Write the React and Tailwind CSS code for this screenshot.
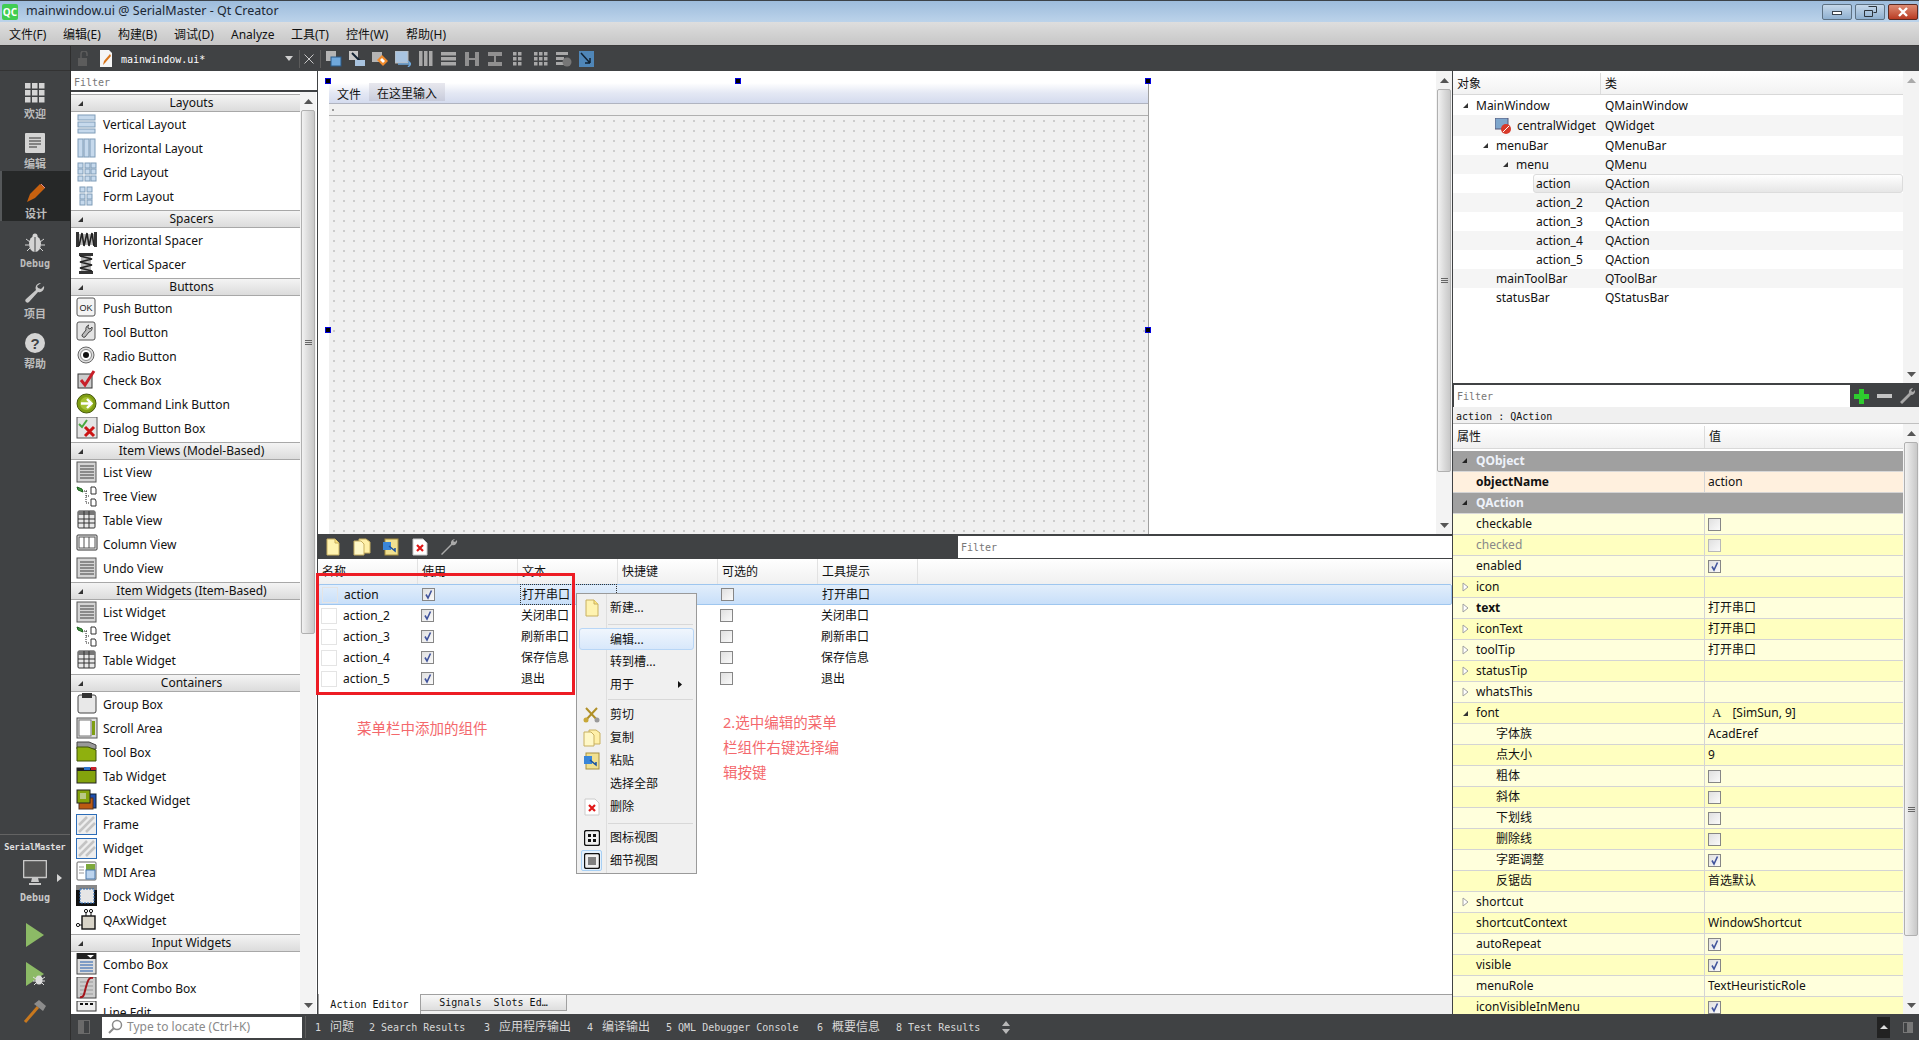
import React from "react";

const MONO = "font-['DejaVu_Sans_Mono','Noto_Sans_CJK_SC',monospace]";

const Svg = ({ w = 22, h = 22, vb, children, className = "" }) => (
  <svg width={w} height={h} viewBox={vb || `0 0 ${w} ${h}`} className={"shrink-0 " + className}>{children}</svg>
);

const blue = { fill: "#c6d9ec", stroke: "#7f9cb8" };
const listLines = (
  <g>
    <rect x="1" y="1" width="19" height="20" fill="#d4d4d4" stroke="#555" />
    {[4, 7, 10, 13, 16].map((y) => <rect key={y} x="4" y={y} width="14" height="2" fill="#8a8a8a" />)}
  </g>
);
const treeIcon = (
  <g>
    <path d="M1 2l5 2 1 3-5-2z" fill="#3f9a3f" stroke="#1e5e1e" />
    <path d="M8 6h4M10 6v12h3M10 11h3" stroke="#222" strokeDasharray="1 1" fill="none" />
    <path d="M15 2h4l1 2v5h-5zM15 14h4l1 2v5h-5z" fill="#fff" stroke="#333" />
  </g>
);
const tableIcon = (
  <g>
    <rect x="2" y="2" width="17" height="17" rx="1" fill="#e8e8e8" stroke="#333" />
    <rect x="2" y="2" width="17" height="4" fill="#777" />
    <path d="M2 10h17M2 14h17M8 2v17M13 2v17" stroke="#333" />
  </g>
);
const hatch = (
  <g stroke="#c4c4c4" strokeWidth="2.5">
    <path d="M3 12l8-8M3 19l15-15M10 19l9-9" />
  </g>
);

const WI = {
  v: <g {...blue}><rect x="2" y="2" width="17" height="5" /><rect x="2" y="9" width="17" height="5" /><rect x="2" y="16" width="17" height="4" /></g>,
  h: <g {...blue}><rect x="2" y="2" width="5" height="18" /><rect x="8" y="2" width="5" height="18" /><rect x="14" y="2" width="5" height="18" /></g>,
  g: <g {...blue}>{[2, 9, 15].flatMap((x) => [2, 8, 15].map((y) => <rect key={x + "-" + y} x={x} y={y} width="5" height="5" />))}</g>,
  f: <g {...blue}>{[4, 11].flatMap((x) => [2, 9, 15].map((y) => <rect key={x + "-" + y} x={x} y={y} width="5" height="5" />))}</g>,
  hs: <g><rect x="0" y="3" width="3" height="15" fill="#333" /><rect x="18" y="3" width="3" height="15" fill="#333" /><rect x="3" y="5" width="15" height="11" fill="#bbb" /><path d="M3 17l3-13 2 13 3-13 2 13 3-13 2 13" fill="none" stroke="#222" strokeWidth="1.6" /></g>,
  vs: <g><rect x="3" y="0" width="14" height="3" fill="#333" /><rect x="3" y="18" width="14" height="3" fill="#333" /><rect x="5" y="3" width="10" height="15" fill="#bbb" /><path d="M4 3l12 3-12 3 12 3-12 3 12 3" fill="none" stroke="#222" strokeWidth="1.6" /></g>,
  ok: <g><rect x="1" y="1" width="18" height="18" rx="2" fill="#f4f4f4" stroke="#555" /><text x="10" y="14" fontSize="9" textAnchor="middle" fill="#222" fontFamily="Liberation Sans">OK</text></g>,
  tb: <g><rect x="1" y="1" width="18" height="18" rx="2" fill="#e4e4e4" stroke="#555" /><path d="M13 4a4 4 0 00-3 5l-4 5a2 2 0 003 2l4-5a4 4 0 003-5l-2 2-2-1V5z" fill="#bbb" stroke="#444" /></g>,
  r: <g><circle cx="10" cy="10" r="8" fill="#ddd" stroke="#666" /><circle cx="10" cy="10" r="5.5" fill="#fff" stroke="#888" /><circle cx="10" cy="10" r="3" fill="#111" /></g>,
  c: <g><rect x="2" y="5" width="14" height="14" fill="#ccc" stroke="#333" /><path d="M5 11l4 5 9-14" fill="none" stroke="#c8202a" strokeWidth="3" /></g>,
  cl: <g><circle cx="10.5" cy="10.5" r="9.5" fill="#7f9e13" stroke="#46590a" /><circle cx="10.5" cy="10.5" r="6.5" fill="#a6c233" /><path d="M5 10.5h10M11 6l4.5 4.5L11 15" fill="none" stroke="#fff" strokeWidth="2.4" /></g>,
  d: <g><rect x="1" y="0" width="20" height="21" fill="#e4e4e4" stroke="#555" /><path d="M3 7l3 3 5-7" fill="none" stroke="#49a83e" strokeWidth="2" /><path d="M9 10l9 9M18 10l-9 9" stroke="#cc1414" strokeWidth="3" /></g>,
  l: listLines, t: treeIcon, ta: tableIcon,
  co: <g><rect x="1" y="2" width="20" height="15" rx="1" fill="#f4f4f4" stroke="#333" /><rect x="3" y="4" width="16" height="11" fill="#fff" stroke="#555" /><path d="M8 4v11M13 4v11" stroke="#555" /></g>,
  gb: <g><rect x="2" y="2" width="18" height="18" rx="2" fill="#e8e8e8" stroke="#444" /><rect x="6" y="0" width="10" height="5" fill="#333" /></g>,
  sa: <g><rect x="1" y="1" width="20" height="20" fill="#ddd" stroke="#555" /><rect x="3" y="3" width="12" height="16" fill="#fff" stroke="#777" /><rect x="16" y="4" width="3" height="14" fill="#7f9e13" /></g>,
  tbx: <g><path d="M1 1l12 0 7 3v4H1z" fill="#999" stroke="#444" /><path d="M1 6h11l8 3v11H1z" fill="#8fb00e" stroke="#3e5206" /></g>,
  tw: <g><rect x="1" y="3" width="19" height="15" fill="#84a30c" stroke="#222" /><rect x="1" y="3" width="19" height="3" fill="#222" /><rect x="8" y="2" width="6" height="3" fill="#2d73c9" /><rect x="15" y="2" width="5" height="3" fill="#c8202a" /></g>,
  sw: <g><rect x="13" y="5" width="7" height="14" fill="#1f4fae" stroke="#123" /><rect x="3" y="9" width="14" height="11" fill="#bb5a12" stroke="#532" /><rect x="1" y="1" width="13" height="13" fill="#84a30c" stroke="#222" /><path d="M4 5h6M4 7h6M4 9h6" stroke="#eef" /></g>,
  fr: <g><rect x="0.5" y="1.5" width="20" height="20" fill="#eee" stroke="#2d6db8" />{hatch}</g>,
  wd: <g><rect x="0.5" y="1.5" width="20" height="20" fill="#eee" stroke="#2d6db8" />{hatch}</g>,
  m: <g><rect x="1" y="1" width="19" height="18" rx="1" fill="#fff" stroke="#666" /><rect x="10" y="3" width="9" height="6" fill="#7da83a" /><rect x="10" y="9" width="9" height="9" fill="#bcd4ee" stroke="#4b78aa" /><path d="M3 6h5M3 9h5M3 12h5" stroke="#999" /></g>,
  dk: <g><rect x="0" y="0" width="21" height="21" fill="#111" /><rect x="0" y="0" width="21" height="5" fill="#888" /><rect x="4" y="4" width="14" height="14" fill="#e6e6e6" stroke="#2d6db8" strokeDasharray="2 1" /></g>,
  q: <g><rect x="6" y="7" width="13" height="13" fill="#d8d4c8" stroke="#111" strokeWidth="1.4" /><path d="M10 7V3M15 7V3M0 16h6" stroke="#111" /><circle cx="10" cy="2" r="1.6" fill="#fff" stroke="#111" /><circle cx="15" cy="2" r="1.6" fill="#fff" stroke="#111" /><circle cx="2" cy="16" r="1.6" fill="#fff" stroke="#111" /></g>,
  cb: <g><rect x="1" y="0" width="19" height="21" fill="#ddd" stroke="#444" /><rect x="1" y="0" width="19" height="6" fill="#222" /><path d="M11 2h7l-3.500 3z" fill="#fff" /><path d="M4 9h13M4 12h13M4 15h13M4 18h13" stroke="#5f86bd" strokeWidth="1.6" /></g>,
  fc: <g><rect x="1" y="0" width="19" height="21" fill="#ccc" stroke="#444" /><path d="M4 5h13M4 9h13M4 13h13M4 17h13" stroke="#999" /><path d="M4 20c4 1 4-3 6-10s3-10 7-9" fill="none" stroke="#a3151b" strokeWidth="2" /></g>,
  le: <g><rect x="1" y="0" width="19" height="10" fill="#eee" stroke="#333" /><path d="M4 3h3M9 3h3M14 3h3" stroke="#111" strokeWidth="2" /></g>,
};

const CATS = [
  ["Layouts", [["v", "Vertical Layout"], ["h", "Horizontal Layout"], ["g", "Grid Layout"], ["f", "Form Layout"]]],
  ["Spacers", [["hs", "Horizontal Spacer"], ["vs", "Vertical Spacer"]]],
  ["Buttons", [["ok", "Push Button"], ["tb", "Tool Button"], ["r", "Radio Button"], ["c", "Check Box"], ["cl", "Command Link Button"], ["d", "Dialog Button Box"]]],
  ["Item Views (Model-Based)", [["l", "List View"], ["t", "Tree View"], ["ta", "Table View"], ["co", "Column View"], ["l", "Undo View"]]],
  ["Item Widgets (Item-Based)", [["l", "List Widget"], ["t", "Tree Widget"], ["ta", "Table Widget"]]],
  ["Containers", [["gb", "Group Box"], ["sa", "Scroll Area"], ["tbx", "Tool Box"], ["tw", "Tab Widget"], ["sw", "Stacked Widget"], ["fr", "Frame"], ["wd", "Widget"], ["m", "MDI Area"], ["dk", "Dock Widget"], ["q", "QAxWidget"]]],
  ["Input Widgets", [["cb", "Combo Box"], ["fc", "Font Combo Box"], ["le", "Line Edit"]]],
];

const Tri = ({ color = "#333" }) => (
  <svg width="7" height="7" viewBox="0 0 7 7" className="shrink-0"><path d="M6 1v5H1z" fill={color} /></svg>
);
const Open = () => (
  <svg width="7" height="10" viewBox="0 0 7 10" className="shrink-0"><path d="M1 1l5 4-5 4z" fill="#fff" stroke="#a0a0a0" /></svg>
);

const Check = ({ on, dim }) => (
  <div className={"flex h-[13px] w-[13px] shrink-0 items-center justify-center border bg-gradient-to-br from-[#e0e0e0] to-[#fafafa] " + (dim ? "border-[#b8b8b8]" : "border-[#868686]")}>
    {on && (
      <svg width="11" height="11" viewBox="0 0 11 11"><path d="M3 5.500l2 3.500 3.500-7.500" fill="none" stroke="#41549c" strokeWidth="1.600" /></svg>
    )}
  </div>
);

const Scroll = ({ thumb, gripClass = "", up = "", className = "" }) => (
  <div className={"flex w-[16px] shrink-0 flex-col items-center bg-[#f3f3f3] " + className}>
    <div className="flex h-[18px] w-full items-center justify-center">
      <svg width="9" height="5" viewBox="0 0 9 5"><path d="M4.500 0l4.500 5H0z" fill={up || "#555"} /></svg>
    </div>
    <div className={"flex w-[14px] flex-col items-center justify-center rounded-[2px] border border-[#b0b0b0] bg-gradient-to-r from-[#f2f2f2] via-[#dcdcdc] to-[#c8c8c8] " + thumb}>
      <div className={"flex flex-col gap-[1px] " + gripClass}>
        <div className="h-[1px] w-[7px] bg-[#666]" /><div className="h-[1px] w-[7px] bg-[#666]" /><div className="h-[1px] w-[7px] bg-[#666]" />
      </div>
    </div>
    <div className="flex-1" />
    <div className="flex h-[18px] w-full items-center justify-center">
      <svg width="9" height="5" viewBox="0 0 9 5"><path d="M4.500 5L9 0H0z" fill="#555" /></svg>
    </div>
  </div>
);

const TitleBar = () => (
  <div className="flex h-[22px] shrink-0 items-center border-t border-[#3c4248] bg-gradient-to-b from-[#9dbcdc] to-[#bcd3ea]">
    <div className="ml-[2px] flex h-[16px] w-[16px] items-center justify-center rounded-[2px] bg-[#41cd52] text-[10px] font-bold leading-none text-white">QC</div>
    <div className="ml-[8px] text-[12.500px] leading-none text-[#1c2733]">mainwindow.ui @ SerialMaster - Qt Creator</div>
    <div className="ml-auto mr-[1px] flex gap-[3px]">
      <div className="flex h-[16px] w-[30px] items-center justify-center rounded-[2px] border border-[#5d7183] bg-gradient-to-b from-[#c6d8ea] to-[#8fb0d0]">
        <div className="mt-[2px] h-[4px] w-[10px] border border-[#39424c] bg-white" />
      </div>
      <div className="flex h-[16px] w-[30px] items-center justify-center rounded-[2px] border border-[#5d7183] bg-gradient-to-b from-[#c6d8ea] to-[#8fb0d0]">
        <svg width="13" height="11" viewBox="0 0 13 11"><path d="M4.500.5h8v6h-3M.5 4.500h8v6h-8z" fill="none" stroke="#2c343c" /></svg>
      </div>
      <div className="flex h-[16px] w-[30px] items-center justify-center rounded-[2px] border border-[#5a2a22] bg-gradient-to-b from-[#dc8a72] to-[#b93a22]">
        <svg width="12" height="10" viewBox="0 0 12 10"><path d="M2 1l8 8M10 1L2 9" stroke="#fff" strokeWidth="2.400" /></svg>
      </div>
    </div>
  </div>
);

const MENU = [["文件(F)", "w-[54px]"], ["编辑(E)", "w-[55px]"], ["构建(B)", "w-[56px]"], ["调试(D)", "w-[57px]"], ["Analyze", "w-[60px]"], ["工具(T)", "w-[55px]"], ["控件(W)", "w-[60px]"], ["帮助(H)", "w-[60px]"]];
const MenuBar = () => (
  <div className="flex h-[24px] shrink-0 items-center bg-gradient-to-b from-[#dedede] to-[#c6c6c6] pl-[9px] pt-[2px] text-[12px] text-[#111] border-b border-[#3a3a3a]">
    {MENU.map(([t, w]) => <div key={t} className={w}>{t}</div>)}
  </div>
);

const Mode = ({ label, children, active, mono }) => (
  <div className={"flex h-[50px] flex-col items-center pt-[12px] " + (active ? "border-l-2 border-[#55585a] bg-[#262828]" : "")}>
    <div className="flex h-[20px] items-center justify-center">{children}</div>
    <div className={"mt-[4px] font-bold leading-[14px] text-[#bcbcbc] " + (mono ? MONO + " text-[10px]" : "text-[11px]")}>{label}</div>
  </div>
);

const Sidebar = () => (
  <div className="flex w-[71px] shrink-0 flex-col border-r border-[#2e2e2e] bg-[#404244]">
    <div className="h-[25px] border-b border-[#333]" />
    <Mode label="欢迎">
      <Svg w={20} h={20}>{[0, 7, 14].flatMap((x) => [0, 7, 14].map((y) => <rect key={x + "" + y} x={x} y={y} width="5.500" height="5.500" fill="#d4d4d4" />))}</Svg>
    </Mode>
    <Mode label="编辑">
      <Svg w={20} h={20}><rect x="0" y="0" width="20" height="20" rx="1" fill="#d4d4d4" /><path d="M4 5h12M4 8h12M4 11h12M4 14h8" stroke="#333" /></Svg>
    </Mode>
    <Mode label="设计" active>
      <Svg w={20} h={20}><path d="M1 19l3-8L14 1l5 4L9 15z" fill="#c8610f" /><path d="M15 1l4 4" stroke="#e88" /></Svg>
    </Mode>
    <Mode label="Debug" mono>
      <Svg w={20} h={20}><ellipse cx="10" cy="11" rx="6" ry="8" fill="#d4d4d4" /><circle cx="10" cy="3" r="2.500" fill="#d4d4d4" /><path d="M1 6l4 3M19 6l-4 3M0 12h4M20 12h-4M2 18l3-3M18 18l-3-3M10 3v16" stroke="#d4d4d4" /><path d="M10 4v16" stroke="#404244" /></Svg>
    </Mode>
    <Mode label="项目">
      <Svg w={20} h={20}><path d="M16 0a5 5 0 00-5 7L1 16a2 2 0 003 3l9-10a5 5 0 006-6l-3 3-3-1-1-2z" fill="#c8c8c8" /></Svg>
    </Mode>
    <Mode label="帮助">
      <Svg w={20} h={20}><circle cx="10" cy="10" r="10" fill="#d4d4d4" /><text x="10" y="15.500" fontSize="15" fontWeight="700" fontFamily="Liberation Sans" textAnchor="middle" fill="#404244">?</text></Svg>
    </Mode>
    <div className="flex-1" />
    <div className="flex h-[206px] flex-col items-center border-t border-[#636363] pt-[5px]">
      <div className={MONO + " text-[8.500px] font-bold leading-[14px] text-[#e0e0e0]"}>SerialMaster</div>
      <div className="relative mt-[6px] flex w-full justify-center">
        <Svg w={24} h={25}><rect x="0.500" y="0.500" width="23" height="17" rx="1" fill="#555" stroke="#c8c8c8" strokeWidth="1.600" /><path d="M9 18h6l1 4H8zM6 23h12v2H6z" fill="#c8c8c8" /></Svg>
        <svg width="5" height="8" viewBox="0 0 5 8" className="absolute right-[8px] top-[14px]"><path d="M0 0l5 4-5 4z" fill="#d4d4d4" /></svg>
      </div>
      <div className={MONO + " mt-[6px] text-[10px] font-bold leading-[14px] text-[#c8c8c8]"}>Debug</div>
      <Svg w={20} h={24} className="mt-[18px]"><path d="M1 0l18 12L1 24z" fill="#8cba66" /></Svg>
      <div className="relative mt-[15px] h-[24px] w-[20px]">
        <Svg w={20} h={24}><path d="M1 0l18 12L1 24z" fill="#8cba66" /></Svg>
        <svg width="12" height="12" viewBox="0 0 12 12" className="absolute left-[8px] top-[11px]"><ellipse cx="6" cy="7" rx="3.500" ry="4.500" fill="#ddd" /><path d="M0 4l3 2M12 4L9 6M0 8h3M12 8H9M1 12l2-2M11 12L9 10" stroke="#ddd" /></svg>
      </div>
      <Svg w={24} h={24} className="mt-[13px]"><path d="M2 23L15 8" stroke="#c8781e" strokeWidth="3" /><path d="M11 5l5-4 7 6-3 5z" fill="#8c8c8c" /></Svg>
    </div>
  </div>
);

const ToolIcon = ({ children }) => <div className="flex h-[25px] w-[23px] items-center justify-center">{children}</div>;

const TopTool = () => (
  <div className="flex h-[25px] shrink-0 items-center bg-[#404244]">
    <Svg w={14} h={16} className="ml-[6px]"><rect x="1" y="7" width="9" height="8" fill="#5c5c5c" /><path d="M4 7V3a3 3 0 016 0v2" fill="none" stroke="#5c5c5c" strokeWidth="1.500" /></Svg>
    <Svg w={14} h={19} className="ml-[8px]"><path d="M1 1h9l3 3v14H1z" fill="#f5f5f5" /><path d="M4 16l1-4 6-7 1 2-6 7z" fill="#d8741a" /></Svg>
    <div className={MONO + " ml-[8px] w-[164px] pt-[2px] text-[10px] text-white"}>mainwindow.ui*</div>
    <svg width="8" height="5" viewBox="0 0 8 5"><path d="M0 0h8L4 5z" fill="#d0d0d0" /></svg>
    <div className="ml-[6px] h-[18px] w-[1px] bg-[#5c5c5c]" />
    <svg width="10" height="10" viewBox="0 0 10 10" className="ml-[4px]"><path d="M.5.5l9 9M9.500.5l-9 9" stroke="#c8c8c8" /></svg>
    <div className="ml-[6px] h-[18px] w-[1px] bg-[#5c5c5c]" />
    <div className="ml-[1px] flex">
      <ToolIcon><Svg w={16} h={16}><rect x="0" y="0" width="10" height="10" fill="#b4b4b4" /><rect x="5" y="6" width="10" height="9" fill="#6fa8dc" stroke="#2a5a88" /></Svg></ToolIcon>
      <ToolIcon><Svg w={16} h={16}><rect x="0" y="0" width="9" height="9" fill="#c8c8c8" /><path d="M3 2l8 8" stroke="#123" strokeWidth="2" /><rect x="6" y="9" width="10" height="6" fill="#a9c4e0" /></Svg></ToolIcon>
      <ToolIcon><Svg w={16} h={16}><rect x="0" y="1" width="10" height="10" fill="#b4b4b4" /><path d="M5 9l5-5 6 6-5 5z" fill="#f08a2c" /><path d="M8 9l2-2 3 3-2 2z" fill="#fff" /></Svg></ToolIcon>
      <ToolIcon><Svg w={16} h={16}><rect x="0" y="0" width="13" height="12" fill="#a9c4e0" stroke="#bbb" /><path d="M3 13h12M13 10l3 3-3 3" stroke="#6fa8dc" fill="none" strokeWidth="1.500" /></Svg></ToolIcon>
      <ToolIcon><Svg w={14} h={15}><path d="M0 0h3.500v15H0zM5 0h3.500v15H5zM10 0h3.500v15H10z" fill="#a8a8a8" /></Svg></ToolIcon>
      <ToolIcon><Svg w={15} h={14}><path d="M0 0h15v3.500H0zM0 5h15v3.500H0zM0 10h15v3.500H0z" fill="#a8a8a8" /></Svg></ToolIcon>
      <ToolIcon><Svg w={14} h={14}><path d="M0 0h4v14H0zM10 0h4v14h-4zM4 6h6v2H4z" fill="#909090" /></Svg></ToolIcon>
      <ToolIcon><Svg w={14} h={14}><path d="M0 0h14v4H0zM0 10h14v4H0zM6 4h2v6H6z" fill="#909090" /></Svg></ToolIcon>
      <ToolIcon><Svg w={9} h={14}>{[0, 5].flatMap((x) => [0, 5, 10].map((y) => <rect key={x + "" + y} x={x} y={y} width="3.500" height="3.500" fill="#a8a8a8" />))}</Svg></ToolIcon>
      <ToolIcon><Svg w={14} h={14}>{[0, 5, 10].flatMap((x) => [0, 5, 10].map((y) => <rect key={x + "" + y} x={x} y={y} width="3.500" height="3.500" fill="#a8a8a8" />))}</Svg></ToolIcon>
      <ToolIcon><Svg w={16} h={16}><path d="M0 1h12v3H0zM0 6h8v3H0zM0 11h8v3H0z" fill="#a8a8a8" /><circle cx="11" cy="11" r="4.500" fill="#777" /></Svg></ToolIcon>
      <ToolIcon><Svg w={15} h={16}><rect x="0" y="0" width="15" height="16" fill="#4f86b8" /><path d="M2 2l9 10M11 12V7M11 12H6" stroke="#123" strokeWidth="1.500" fill="none" /></Svg></ToolIcon>
    </div>
  </div>
);

const WidgetBox = () => (
  <div className="flex w-[246px] shrink-0 flex-col bg-white">
    <div className={MONO + " mt-[1px] flex h-[20px] shrink-0 items-center border-b-2 border-[#404244] pl-[3px] pt-[2px] text-[10px] text-[#777]"}>Filter</div>
    <div className="flex min-h-0 flex-1">
      <div className="w-[229px] overflow-hidden pt-[2px]">
        {CATS.map(([name, items]) => (
          <div key={name} className="pb-[2px]">
            <div className="relative flex h-[18px] items-center justify-center border-y border-[#a8a8a8] bg-gradient-to-b from-[#f4f4f4] to-[#dcdcdc] pl-[12px] text-[12px] text-[#111]">
              <div className="absolute left-[6px] top-[5px]"><Tri /></div>
              {name}
            </div>
            {items.map(([k, t]) => (
              <div key={t} className="flex h-[24px] items-center pl-[5px] text-[12px] text-[#111]">
                <Svg>{WI[k]}</Svg>
                <span className="ml-[5px] mt-[2px] whitespace-nowrap">{t}</span>
              </div>
            ))}
          </div>
        ))}
      </div>
      <Scroll thumb="h-[524px]" gripClass="mt-[-60px]" />
    </div>
  </div>
);

const Handle = ({ cls }) => <div className={"absolute h-[6px] w-[6px] border border-[#0000e0] bg-black " + cls} />;

const FormEditor = () => (
  <div className="flex h-[463px] shrink-0">
    <div className="relative min-w-0 flex-1 overflow-hidden bg-white pl-[11px] pt-[12px]">
      <div className="h-[500px] w-[820px] border-r border-[#a0a0a0] bg-[#f0f0f0]">
        <div className="flex h-[21px] items-start border-b border-[#b0b4c0] bg-gradient-to-b from-white via-[#e4e8f4] to-[#d4dbee] text-[12px] text-[#111]">
          <div className="ml-[8px] mt-[3px]">文件</div>
          <div className="ml-[8px] flex h-[18px] w-[76px] items-center justify-center bg-gradient-to-b from-[#e8e8ee] to-[#c8ccdc] pt-[3px]">在这里输入</div>
        </div>
        <div className="flex h-[12px] items-center border-b border-[#b0b0b0] pl-[3px]">
          <div className="h-[2px] w-[2px] bg-[#999]" />
        </div>
        <div className="h-[470px] bg-[radial-gradient(#a4a4a4_0.6px,transparent_0.8px)] bg-[size:10px_10px]" />
      </div>
      <Handle cls="left-[7px] top-[7px]" />
      <Handle cls="left-[417px] top-[7px]" />
      <Handle cls="left-[827px] top-[7px]" />
      <Handle cls="left-[7px] top-[256px]" />
      <Handle cls="left-[827px] top-[256px]" />
    </div>
    <Scroll thumb="h-[383px]" gripClass="mt-[0px]" className="w-[15px]" />
  </div>
);

const ACT_HEAD = ["名称", "使用", "文本", "快捷键", "可选的", "工具提示"];
const ACTIONS = [["action", "打开串口"], ["action_2", "关闭串口"], ["action_3", "刷新串口"], ["action_4", "保存信息"], ["action_5", "退出"]];

const DocIcon = () => <Svg w={14} h={18}><path d="M1 1h8l4 4v12H1z" fill="#fff3b0" stroke="#c8b060" /><path d="M9 1v4h4" fill="#ffe680" stroke="#c8b060" /></Svg>;
const CopyIcon = () => <Svg w={18} h={18}><path d="M6 1h7l4 3v11H6z" fill="#fff0a8" stroke="#c8b060" /><path d="M1 3h7l3 3v11H1z" fill="#fff8c8" stroke="#c8b060" /></Svg>;
const PasteIcon = () => <Svg w={18} h={18}><rect x="3" y="1" width="13" height="16" fill="#f0e090" stroke="#a89040" /><rect x="1" y="4" width="8" height="8" fill="#3a86d8" /><path d="M7 8l6 5v-3" stroke="#1850a0" fill="none" strokeWidth="1.500" /></Svg>;
const DelIcon = () => <Svg w={16} h={18}><path d="M1 1h10l4 4v12H1z" fill="#fff" stroke="#ccc" /><path d="M5 7l6 6M11 7l-6 6" stroke="#e01818" strokeWidth="2.200" /></Svg>;

const MenuRow = ({ icon, label, cls = "", arrow }) => (
  <div className={"flex h-[23px] items-center text-[12px] text-[#111] " + cls}>
    <div className="flex w-[29px] shrink-0 items-center justify-center">{icon}</div>
    <div className="ml-[4px]">{label}</div>
    {arrow && <svg width="4" height="7" viewBox="0 0 4 7" className="ml-auto mr-[14px]"><path d="M0 0l4 3.500L0 7z" fill="#111" /></svg>}
  </div>
);
const MenuSep = ({ cls }) => <div className={"ml-[31px] mr-[3px] h-[1px] bg-[#d8d8d8] " + cls} />;
const ToolSlot = ({ children }) => <div className="flex w-[29px] items-center justify-center">{children}</div>;

const ContextMenu = () => (
  <div className="absolute left-[258px] top-[59px] h-[281px] w-[121px] border border-[#9a9a9a] bg-[#f0f0f0]">
    <div className="absolute bottom-0 left-[29px] top-0 w-[1px] bg-[#dedede]" />
    <div className="relative pt-[2px]">
      <MenuRow icon={<DocIcon />} label="新建..." />
      <MenuSep cls="mt-[5px] mb-[3px]" />
      <div className="mx-[2px] h-[22px] rounded-[3px] border border-[#b8d6f6] bg-gradient-to-b from-[#f0f6fd] to-[#d8e8fb]">
        <div className="ml-[-3px] mt-[-1px]"><MenuRow label="编辑..." /></div>
      </div>
      <MenuRow label="转到槽..." />
      <MenuRow label="用于" arrow />
      <MenuSep cls="mt-[3px] mb-[3px]" />
      <MenuRow icon={<Svg w={17} h={17}><path d="M2 15L14 2M3 2l12 13" stroke="#b09028" strokeWidth="2" /><circle cx="3" cy="14" r="2.500" fill="#c8a838" /><circle cx="14" cy="14" r="2.500" fill="#9a9a9a" /></Svg>} label="剪切" />
      <MenuRow icon={<CopyIcon />} label="复制" />
      <MenuRow icon={<PasteIcon />} label="粘贴" />
      <MenuRow label="选择全部" />
      <MenuRow icon={<DelIcon />} label="删除" />
      <MenuSep cls="mt-[5px] mb-[2px]" />
      <MenuRow icon={<Svg w={16} h={16}><rect x="0.500" y="0.500" width="15" height="15" rx="2" fill="#f0f0f0" stroke="#111" strokeWidth="1.400" /><rect x="4" y="4" width="3" height="3" fill="#111" /><rect x="9" y="4" width="3" height="3" fill="#111" /><rect x="4" y="9" width="3" height="3" fill="#111" /><rect x="9" y="9" width="3" height="3" fill="#111" /></Svg>} label="图标视图" />
      <MenuRow icon={<div className="flex h-[21px] w-[21px] items-center justify-center rounded-[2px] border border-[#a8d0f4] bg-[#e4f0fb]"><Svg w={16} h={16}><rect x="0.500" y="0.500" width="15" height="15" rx="2" fill="#f0f0f0" stroke="#111" strokeWidth="1.400" /><path d="M4 5h8M4 7h8M4 9h8M4 11h8" stroke="#111" /></Svg></div>} label="细节视图" />
    </div>
  </div>
);

const ActionEditor = () => (
  <div className="relative flex min-h-0 flex-1 flex-col bg-white">
    <div className="flex h-[25px] shrink-0 items-center bg-[#404244]">
      <div className="flex">
        <ToolSlot><DocIcon /></ToolSlot>
        <ToolSlot><CopyIcon /></ToolSlot>
        <ToolSlot><PasteIcon /></ToolSlot>
        <ToolSlot><DelIcon /></ToolSlot>
        <ToolSlot><Svg w={18} h={18}><path d="M15 1a4 4 0 00-4 5L1 16l1 1L12 7a4 4 0 005-5l-2 2-2-1z" fill="#aaa" /></Svg></ToolSlot>
      </div>
      <div className={MONO + " ml-auto flex h-[22px] w-[494px] items-center bg-white pl-[3px] pt-[2px] text-[10px] text-[#777]"}>Filter</div>
    </div>
    <div className="flex h-[25px] shrink-0 bg-gradient-to-b from-white to-[#f0f0f0] text-[12px] text-[#111]">
      {ACT_HEAD.map((h) => (
        <div key={h} className="flex w-[100px] items-center border-r border-[#e2e2e2] pl-[4px]">{h}</div>
      ))}
    </div>
    {ACTIONS.map(([n, t], i) => (
      <div key={n} className={"flex h-[21px] shrink-0 items-center text-[12px] text-[#111] " + (i === 0 ? "relative rounded-[2px] border border-[#9ec6ef] bg-gradient-to-b from-[#e2eefb] to-[#c8dff9] box-border" : "")}>
        <div className={"ml-[3px] h-[16px] w-[16px] border border-[#e4e4e4] " + (i === 0 ? "border-[#c8dcf4]" : "")} />
        <div className="ml-[6px] w-[78px]">{n}</div>
        <Check on />
        <div className="ml-[87px] w-[100px]">{t}</div>
        <div className="ml-[99px]"><Check /></div>
        <div className="ml-[88px]">{t}</div>
        {i === 0 && <div className="absolute left-[201px] top-[-1px] h-[21px] w-[97px] border border-dotted border-[#333]" />}
      </div>
    ))}
    <div className="flex-1" />
    <div className={MONO + " flex h-[20px] shrink-0 items-start border-t border-[#a0a0a0] bg-[#f0f0f0] text-[10px] text-[#111]"}>
      <div className="mt-[-1px] flex h-[20px] w-[103px] items-center justify-center border-x border-[#a0a0a0] bg-white">Action Editor</div>
      <div className="flex h-[16px] w-[146px] items-center justify-center whitespace-pre border-b border-r border-[#a0a0a0] bg-gradient-to-b from-[#f8f8f8] to-[#dedede]">Signals  Slots Ed…</div>
    </div>

    <div className="absolute left-[-2px] top-[39px] h-[122px] w-[259px] border-[3px] border-[#ed1c24]" />
    <ContextMenu />
    <div className="absolute left-[39px] top-[185px] text-[14.500px] leading-[18px] text-[#f4686c]">菜单栏中添加的组件</div>
    <div className="absolute left-[405px] top-[176px] w-[125px] text-[14.500px] leading-[25px] text-[#f4686c]">2.选中编辑的菜单栏组件右键选择编辑按键</div>
  </div>
);

const TREE = [
  ["MainWindow", "QMainWindow", 0, true, "h-[20px] pt-[1px]"],
  ["centralWidget", "QWidget", 1, false, "h-[21px]", true],
  ["menuBar", "QMenuBar", 1, true],
  ["menu", "QMenu", 2, true],
  ["action", "QAction", 3, false, "", false, true],
  ["action_2", "QAction", 3],
  ["action_3", "QAction", 3],
  ["action_4", "QAction", 3],
  ["action_5", "QAction", 3],
  ["mainToolBar", "QToolBar", 1],
  ["statusBar", "QStatusBar", 1],
];
const LV = ["pl-[9px]", "pl-[29px]", "pl-[49px]", "pl-[69px]"];

const ObjectTree = () => (
  <div className="flex h-[312px] shrink-0 bg-white">
    <div className="min-w-0 flex-1">
      <div className="flex h-[24px] bg-gradient-to-b from-white to-[#f2f2f2] pt-[2px] text-[12px] text-[#111] border-b border-[#d8d8d8]">
        <div className="flex w-[148px] items-center border-r border-[#dcdcdc] pl-[4px]">对象</div>
        <div className="flex flex-1 items-center pl-[4px]">类</div>
      </div>
      {TREE.map(([n, c, lv, arrow, h, ico, sel], i) => (
        <div key={n} className={"relative flex items-center text-[12px] text-[#111] " + (h || "h-[19px]") + " " + (i % 2 ? "bg-[#f5f5f5]" : "bg-white")}>
          {sel && <div className="absolute inset-y-0 left-[80px] right-0 rounded-[3px] border border-[#dcdcdc] bg-gradient-to-b from-white to-[#e6e6e6]" />}
          <div className={"relative flex w-[152px] items-center " + LV[lv]}>
            <div className="w-[14px]">{arrow && <Tri />}</div>
            {ico && (
              <Svg w={18} h={16} className="ml-[-1px] mr-[4px]"><rect x="0" y="0" width="13" height="11" fill="#7ea6cc" stroke="#557" /><circle cx="11" cy="11" r="5" fill="#d83a2a" /><path d="M8 14l6-6" stroke="#fff" /></Svg>
            )}
            <span className="whitespace-nowrap">{n}</span>
          </div>
          <span className="relative">{c}</span>
        </div>
      ))}
    </div>
    <Scroll thumb="hidden" up="#aaa" />
  </div>
);

const PROPS = [
  ["QObject", "group"],
  ["objectName", "action", 1, false, true, "obj"],
  ["QAction", "group"],
  ["checkable", false],
  ["checked", false, 1, false, false, "", true],
  ["enabled", true],
  ["icon", "", 1, true],
  ["text", "打开串口", 1, true, true],
  ["iconText", "打开串口", 1, true],
  ["toolTip", "打开串口", 1, true],
  ["statusTip", "", 1, true],
  ["whatsThis", "", 1, true],
  ["font", "font", 1, "tri"],
  ["字体族", "AcadEref", 2],
  ["点大小", "9", 2],
  ["粗体", false, 2],
  ["斜体", false, 2],
  ["下划线", false, 2],
  ["删除线", false, 2],
  ["字距调整", true, 2],
  ["反锯齿", "首选默认", 2],
  ["shortcut", "", 1, true],
  ["shortcutContext", "WindowShortcut"],
  ["autoRepeat", true],
  ["visible", true],
  ["menuRole", "TextHeuristicRole"],
  ["iconVisibleInMenu", true],
];

const PropRow = ({ p, i }) => {
  const [label, val, lv = 1, arrow, bold, kind, dim] = p;
  if (val === "group") {
    return (
      <div className="relative flex h-[21px] items-center border-b border-[#d8d8d8] bg-[#a0a0a0] pl-[23px] text-[12px] font-bold text-[#eef2fa]">
        <div className="absolute left-[8px] top-[6px]"><Tri color="#222" /></div>
        {label}
      </div>
    );
  }
  const bg = kind === "obj" ? "bg-[#fff0de]" : i % 2 ? "bg-[#ffffdc]" : "bg-[#ffffc0]";
  return (
    <div className={"flex h-[21px] items-center border-b border-[#d4d4d4] text-[12px] text-[#111] " + bg}>
      <div className={"flex h-full w-[252px] shrink-0 items-center border-r border-[#d4d4d4] " + (lv === 2 ? "pl-[43px]" : "pl-[9px]")}>
        {lv === 1 && <div className="w-[14px]">{arrow === "tri" ? <Tri /> : arrow ? <Open /> : null}</div>}
        <span className={(bold ? "font-bold " : "") + (dim ? "text-[#888]" : "")}>{label}</span>
      </div>
      <div className="flex flex-1 items-center pl-[3px]">
        {typeof val === "boolean" ? <Check on={val} dim={dim} /> : val === "font" ? (
          <><span className="ml-[4px] mr-[11px] font-['Liberation_Serif',serif] text-[13px]">A</span><span>[SimSun, 9]</span></>
        ) : val}
      </div>
    </div>
  );
};

const RightPanel = () => (
  <div className="flex w-[467px] shrink-0 flex-col border-l border-[#404244]">
    <ObjectTree />
    <div className="flex h-[24px] shrink-0 items-end bg-[#404244] pl-[1px]">
      <div className={MONO + " flex h-[22px] w-[396px] items-center bg-white pl-[3px] text-[10px] text-[#777]"}>Filter</div>
      <div className="ml-[4px] flex h-[22px] flex-1 items-center gap-[8px]">
        <Svg w={15} h={15}><path d="M5 0h5v5h5v5h-5v5H5v-5H0V5h5z" fill="#2ecc2e" /></Svg>
        <Svg w={15} h={15}><rect x="0" y="5" width="15" height="4" fill="#c4c4c4" /></Svg>
        <Svg w={15} h={16}><path d="M13 0a4 4 0 00-4 5L0 14l2 2 9-9a4 4 0 004-5l-2 2-2-1z" fill="#a8a8a8" /></Svg>
      </div>
    </div>
    <div className={MONO + " flex h-[17px] shrink-0 items-center border-b border-[#c0c0c0] bg-[#f0f0f0] pl-[3px] pt-[2px] text-[10px] text-[#111]"}>action : QAction</div>
    <div className="flex min-h-0 flex-1 bg-white">
      <div className="min-w-0 flex-1 overflow-hidden">
        <div className="mb-[2px] flex h-[25px] bg-gradient-to-b from-white to-[#f0f0f0] pt-[2px] text-[12px] text-[#111] border-b border-[#d8d8d8]">
          <div className="flex w-[252px] items-center border-r border-[#dcdcdc] pl-[4px]">属性</div>
          <div className="flex flex-1 items-center pl-[4px]">值</div>
        </div>
        {PROPS.map((p, i) => <PropRow key={p[0]} p={p} i={i} />)}
      </div>
      <Scroll thumb="h-[494px]" gripClass="mt-[240px]" />
    </div>
  </div>
);

const Out = ({ n, t, cjk, cls }) => (
  <div className={"flex items-center text-[#d8d8d8] " + cls}>
    <span className={MONO + " text-[10px] whitespace-pre"}>{n} </span>
    {cjk ? <span className="ml-[3px] text-[12px]">{t}</span> : <span className={MONO + " text-[10px] whitespace-pre"}>{t}</span>}
  </div>
);

const BottomBar = () => (
  <div className="flex h-[26px] shrink-0 items-center bg-[#404244]">
    <div className="ml-[7px] flex h-[14px] w-[12px] border border-[#6a6a6a]"><div className="w-[5px] bg-[#6a6a6a]" /></div>
    <div className="ml-[12px] flex h-[21px] w-[200px] items-center bg-white pl-[6px] text-[12px] text-[#8a8a8a]">
      <Svg w={16} h={16} className="mr-[3px]"><circle cx="9" cy="6" r="4.500" fill="none" stroke="#8a8a8a" strokeWidth="1.500" /><path d="M6 9l-5 5" stroke="#8a8a8a" strokeWidth="2" /></Svg>
      Type to locate (Ctrl+K)
    </div>
    <div className="ml-[3px] h-[22px] w-[1px] bg-[#5c5c5c]" />
    <Out n="1" t="问题" cjk cls="ml-[9px] w-[54px]" />
    <Out n="2" t="Search Results" cls="w-[115px]" />
    <Out n="3" t="应用程序输出" cjk cls="w-[103px]" />
    <Out n="4" t="编译输出" cjk cls="w-[79px]" />
    <Out n="5" t="QML Debugger Console" cls="w-[151px]" />
    <Out n="6" t="概要信息" cjk cls="w-[79px]" />
    <Out n="8" t="Test Results" cls="w-[106px]" />
    <svg width="8" height="13" viewBox="0 0 8 13"><path d="M4 0l4 5H0zM4 13L0 8h8z" fill="#b8b8b8" /></svg>
    <div className="ml-auto flex h-[21px] w-[13px] items-center justify-center bg-[#222]">
      <svg width="8" height="4" viewBox="0 0 8 4"><path d="M4 0l4 4H0z" fill="#ddd" /></svg>
    </div>
    <div className="ml-[13px] mr-[6px] flex h-[11px] w-[10px] border border-[#777]"><div className="ml-auto w-[5px] bg-[#777]" /></div>
  </div>
);

export default function App() {
  return (
    <div className="flex h-[1040px] w-[1919px] flex-col overflow-hidden bg-white font-['Noto_Sans','Noto_Sans_CJK_SC',sans-serif]">
      <TitleBar />
      <MenuBar />
      <div className="flex min-h-0 flex-1">
        <Sidebar />
        <div className="flex min-w-0 flex-1 flex-col">
          <TopTool />
          <div className="flex min-h-0 flex-1">
            <WidgetBox />
            <div className="flex min-w-0 flex-1 flex-col border-l border-[#404244]">
              <FormEditor />
              <ActionEditor />
            </div>
            <RightPanel />
          </div>
          <BottomBar />
        </div>
      </div>
    </div>
  );
}
